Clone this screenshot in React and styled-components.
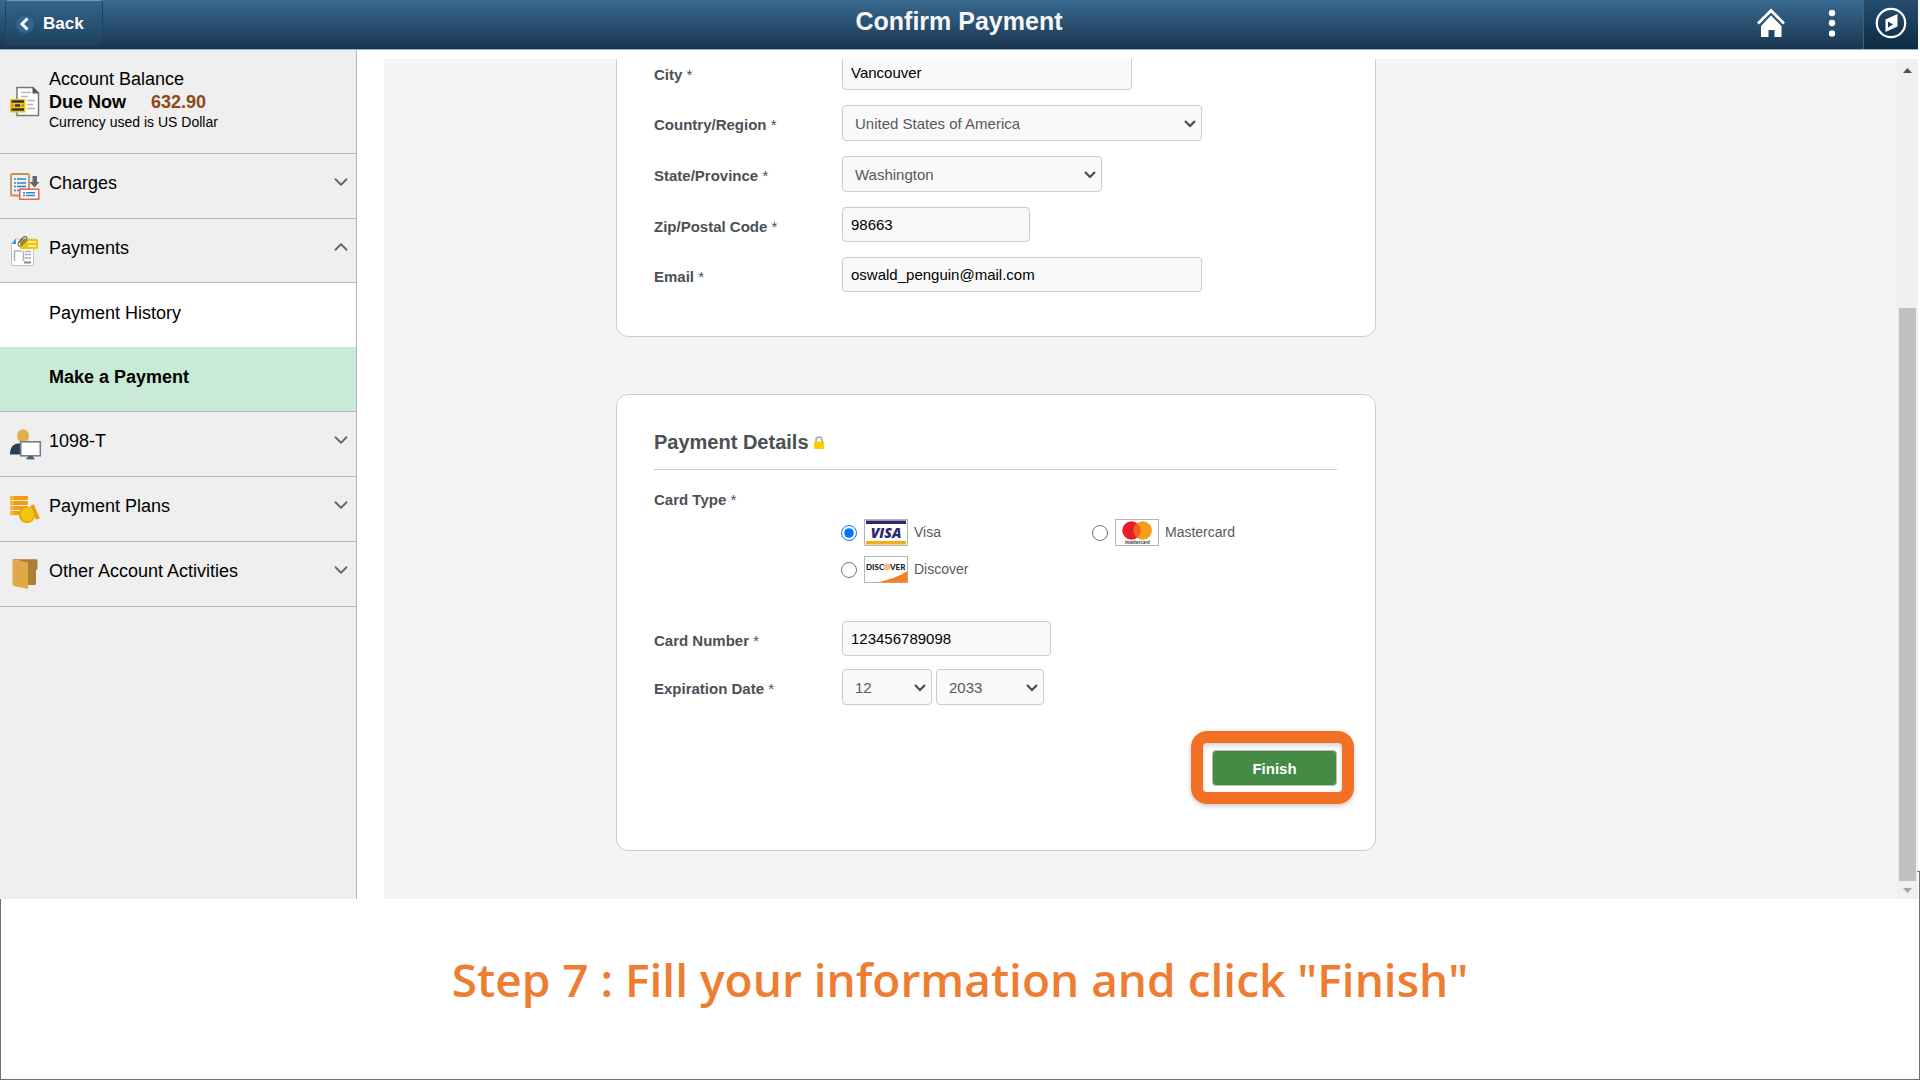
import React from 'react';
import styled, { createGlobalStyle } from 'styled-components';
import { ChevronDown, ChevronUp } from 'lucide-react';

const GlobalStyle = createGlobalStyle`
  * {
    box-sizing: border-box;
  }

  body {
    margin: 0;
    background: #ffffff;
    font-family: "Liberation Sans", Arial, sans-serif;
    color: #000000;
  }
`;

const Page = styled.div`
  display: flex;
  flex-direction: column;
  height: 100vh;
  min-height: 600px;
`;

const AppWindow = styled.div`
  flex: 1;
  min-height: 0;
  display: flex;
  flex-direction: column;
  margin-right: 2px;
`;

/* ---- header ---- */

const Header = styled.header`
  flex: none;
  display: grid;
  grid-template-columns: 1fr auto 1fr;
  height: 50px;
  background: linear-gradient(#386a90, #1a3550);
  border-bottom: 1px solid #8fb0dc;
`;

const BackButton = styled.button`
  justify-self: start;
  display: flex;
  align-items: center;
  gap: 8px;
  width: 98px;
  height: 45px;
  margin-left: 5px;
  padding: 2px 0 0 9px;
  border: 1px solid #1d4263;
  border-top-color: #6f98ba;
  border-radius: 4px;
  background: linear-gradient(#34648b, #1f4162);
  color: #ffffff;
  font-family: inherit;
  font-size: 17px;
  font-weight: bold;
  cursor: pointer;
`;

const Title = styled.h1`
  margin: 0;
  padding-top: 6px;
  font-size: 25px;
  line-height: 30px;
  color: #f7f7f7;
`;

const HeaderActions = styled.div`
  justify-self: end;
  display: flex;
`;

const IconButton = styled.button`
  display: flex;
  align-items: center;
  justify-content: center;
  width: ${(props) => props.$width};
  padding: 0 0 3px;
  border: none;
  border-left: ${(props) => (props.$dark ? '1px solid #3d617f' : 'none')};
  background: ${(props) => (props.$dark ? 'linear-gradient(#254e70, #0f2a43)' : 'none')};
  cursor: pointer;
`;

/* ---- body ---- */

const Body = styled.div`
  flex: 1;
  min-height: 0;
  display: flex;
`;

const Sidebar = styled.nav`
  flex: none;
  width: 357px;
  background: #efefef;
  border-right: 1px solid #b6b6b6;
  overflow: hidden;
`;

const Balance = styled.div`
  display: flex;
  gap: 7px;
  height: 104px;
  padding: 18px 10px 0;
  border-bottom: 1px solid #b6b6b6;

  svg {
    margin-top: 17px;
  }
`;

const BalanceLine = styled.div`
  font-size: 18px;
  line-height: 23px;
  font-weight: ${(props) => (props.$bold ? 'bold' : 'normal')};
`;

const Amount = styled.span`
  margin-left: 25px;
  color: #8b4a17;
`;

const BalanceNote = styled.div`
  font-size: 14px;
  line-height: 16px;
`;

const NavItem = styled.button`
  display: flex;
  align-items: center;
  gap: 7px;
  width: 100%;
  height: ${(props) => (props.$open ? '64px' : '65px')};
  padding: 0 4px 0 10px;
  border: none;
  border-bottom: 1px solid #b6b6b6;
  background: none;
  color: #000000;
  font-family: inherit;
  font-size: 18px;
  text-align: left;
  cursor: pointer;
`;

const NavText = styled.span`
  flex: 1;
  padding-bottom: 5px;
`;

const Chevron = styled.span`
  display: flex;
  padding-bottom: 8px;
  color: #666666;
`;

const SubItem = styled.a`
  display: flex;
  align-items: center;
  height: ${(props) => (props.$active ? '65px' : '64px')};
  padding: 0 0 4px 49px;
  background: ${(props) => (props.$active ? '#c8ead7' : '#ffffff')};
  border-bottom: ${(props) => (props.$active ? '1px solid #b6b6b6' : 'none')};
  font-size: 18px;
  font-weight: ${(props) => (props.$active ? 'bold' : 'normal')};
  color: #000000;
  text-decoration: none;
`;

const Main = styled.main`
  flex: 1;
  min-width: 0;
  display: flex;
  margin: 9px 0 0 27px;
  background: #f4f4f4;
`;

/* anchored to the end, the form is scrolled all the way down */
const Scroller = styled.div`
  flex: 1;
  min-width: 0;
  display: flex;
  flex-direction: column;
  justify-content: flex-end;
  gap: 57px;
  padding: 0 40px 48px 232px;
  overflow: hidden;
`;

const ScrollBar = styled.div`
  flex: none;
  display: flex;
  flex-direction: column;
  width: 21px;
  background: #f0f0f0;
`;

const ScrollArrow = styled.span`
  display: flex;
  align-items: center;
  justify-content: center;
  height: 18px;
  padding-top: ${(props) => (props.$up ? '5px' : '0')};
`;

const ScrollTrack = styled.div`
  flex: 1;
  display: flex;
  flex-direction: column;
  justify-content: flex-end;
  padding: 0 2px;
`;

const ScrollThumb = styled.div`
  height: 71.3%;
  background: #c1c1c1;
`;

/* ---- form ---- */

const Card = styled.section`
  flex: none;
  max-width: 760px;
  padding: 35px 38px ${(props) => props.$bottom} 37px;
  border: 1px solid #cccccc;
  border-radius: 12px;
  background: #ffffff;
`;

const CardTitle = styled.h2`
  display: flex;
  align-items: center;
  gap: 5px;
  margin: 0;
  padding-bottom: 15px;
  border-bottom: 1px solid #cccccc;
  font-size: 20px;
  line-height: 24px;
  color: #4c5054;
`;

const Rows = styled.div`
  display: flex;
  flex-direction: column;
  gap: ${(props) => props.$gap};
`;

const Row = styled.div`
  display: grid;
  grid-template-columns: 188px 1fr;
  align-items: center;
`;

const Label = styled.label`
  padding-top: 4px;
  font-size: 15px;
  line-height: 20px;
  font-weight: bold;
  color: #4c5054;
`;

const Star = styled.span`
  font-weight: normal;
`;

const Input = styled.input`
  width: ${(props) => props.$width};
  height: 35px;
  padding: 0 8px;
  border: 1px solid #cccccc;
  border-radius: 4px;
  background: #f9f9f9;
  color: #000000;
  font-family: inherit;
  font-size: 15px;
`;

const SelectWrap = styled.span`
  position: relative;
  display: block;
  width: ${(props) => props.$width};

  svg {
    position: absolute;
    right: 6px;
    top: 15px;
    pointer-events: none;
  }
`;

const SelectBox = styled.select`
  appearance: none;
  display: block;
  width: 100%;
  height: 36px;
  padding: 0 24px 0 12px;
  border: 1px solid #cccccc;
  border-radius: 4px;
  background: #f9f9f9;
  color: #555a60;
  font-family: inherit;
  font-size: 15px;
`;

const DateFields = styled.div`
  display: flex;
  gap: 4px;
`;

const CardTypes = styled.fieldset`
  margin: 16px 0 38px;
  padding: 0;
  border: none;
`;

const Legend = styled.legend`
  padding: 4px 0 0;
  font-size: 15px;
  line-height: 20px;
  font-weight: bold;
  color: #4c5054;
`;

const CardGrid = styled.div`
  display: grid;
  grid-template-columns: 251px 1fr;
  gap: 10px 0;
  padding: 9px 0 0 187px;
`;

const CardOption = styled.label`
  display: flex;
  align-items: center;
  gap: 6px;
  height: 27px;
  font-size: 14px;
  color: #555a60;
`;

const CardName = styled.span`
  padding-bottom: 2px;
`;

const Radio = styled.input`
  width: 16px;
  height: 16px;
  margin: 0 1px 0 0;
  accent-color: #0075ff;
`;

const Actions = styled.div`
  display: flex;
  justify-content: flex-end;
  margin-top: 45px;
`;

const Highlight = styled.div`
  position: relative;

  &::after {
    content: '';
    position: absolute;
    inset: -19px -17px -18px -21px;
    border: 12px solid #f36f24;
    border-radius: 16px;
    box-shadow: 0 2px 5px rgba(0, 0, 0, 0.22), inset 0 3px 5px rgba(0, 0, 0, 0.16);
    pointer-events: none;
  }
`;

const FinishButton = styled.button`
  display: block;
  width: 125px;
  height: 36px;
  border: 1px solid #b9bdb9;
  border-radius: 4px;
  background: #458a45;
  color: #ffffff;
  font-family: inherit;
  font-size: 15px;
  font-weight: bold;
  cursor: pointer;
`;

/* ---- caption ---- */

const Caption = styled.footer`
  flex: none;
  position: relative;
  padding: 48px 20px 68px;
  border: 1px solid #707070;
  border-top: none;
  text-align: center;
  font-family: "Open Sans", "Noto Sans", sans-serif;
  font-size: 46px;
  line-height: 64px;
  font-weight: 600;
  color: #ed7d31;

  &::before {
    content: '';
    position: absolute;
    top: -28px;
    right: -1px;
    width: 2px;
    height: 28px;
    border-top: 1px solid #707070;
    border-right: 1px solid #707070;
  }
`;

/* ---- icons ---- */

const BackIcon = () => (
  <svg width="20" height="20" viewBox="0 0 20 20">
    <circle cx="10" cy="10" r="9.5" fill="#33658c" stroke="#24506f" />
    <path d="M12.5 4.5 7 10l5.5 5.5" fill="none" stroke="#fff" strokeWidth="3" />
  </svg>
);

const HomeIcon = () => (
  <svg width="28" height="30" viewBox="0 0 28 30">
    <path d="M1 15.500 14 2.500l13 13" fill="none" stroke="#fff" strokeWidth="3" />
    <path d="M14 7.500 24.500 18v11H17.500v-7h-6v7H4V18z" fill="#fff" />
  </svg>
);

const DotsIcon = () => (
  <svg width="8" height="28" viewBox="0 0 8 28">
    <circle cx="4" cy="4" r="3.2" fill="#fff" />
    <circle cx="4" cy="14" r="3.2" fill="#fff" />
    <circle cx="4" cy="24.5" r="3.2" fill="#fff" />
  </svg>
);

const CompassIcon = () => (
  <svg width="32" height="32" viewBox="0 0 32 32">
    <circle cx="16" cy="16" r="14.2" fill="none" stroke="#fff" strokeWidth="2.2" />
    <path d="M10.5 12.5 22.5 7v12.500L10.5 25z" fill="#fff" />
    <path d="M13 14.500v6l5-3z" fill="#1b3c59" />
  </svg>
);

const BalanceIcon = () => (
  <svg width="32" height="32" viewBox="0 0 32 32">
    <path d="M7 2.500h16l5.500 5.500v22.500H7z" fill="#fff" stroke="#777" strokeWidth="1.5" />
    <path d="M22.500 2v6.500H29z" fill="#555" />
    <path d="M11 7.500h10M11 11.500h7M17 15.500h8M17 19.500h6M17 23.500h8" stroke="#b5b5b5" strokeWidth="1.5" />
    <path d="M0 14h15.500v13.500H0z" fill="#f1c40f" />
    <path d="M1.500 16.500h12.500M1.500 24.500h12.500" stroke="#333" strokeWidth="2.5" />
    <path d="M5 20.500h5" stroke="#2c3e50" strokeWidth="2.5" />
    <path d="M1.500 20.500h2M11.500 20.500h2.500" stroke="#8a7a24" strokeWidth="1.5" />
  </svg>
);

const ChargesIcon = () => (
  <svg width="32" height="32" viewBox="0 0 32 32">
    <rect x="1" y="4" width="18" height="21.500" rx="1" fill="#ecf0f1" stroke="#c09553" strokeWidth="1.8" />
    <path d="M4 9h12M4 13h12M4 16.500h12M4 20.500h5" stroke="#2e86c1" strokeWidth="1.5" />
    <path d="M6.500 8v14" stroke="#ecf0f1" strokeWidth="1" />
    <path d="M22.500 6h4.500v6h2.500l-5 5.500-5-5.500h3z" fill="#666" />
    <rect x="9.800" y="19.200" width="19" height="10" fill="#fff" stroke="#e74c3c" strokeWidth="1.3" />
    <path d="M13 22.800h12M13 25.500h12" stroke="#2e86c1" strokeWidth="1.5" />
    <path d="M15.500 22v4.500" stroke="#fff" strokeWidth="1" />
  </svg>
);

const PaymentsIcon = () => (
  <svg width="32" height="32" viewBox="0 0 32 32">
    <path d="M6 4h17.500v26.500H1.500V9z" fill="#fff" stroke="#bdc3c7" />
    <path d="m1.500 9 4.500-5.500V9z" fill="#3498db" />
    <path d="M4 16h8M4.500 16v10M13.500 16v10M15 16.500h6M15 19.500h6M15 23h6" fill="none" stroke="#a9b3b4" strokeWidth="1.5" />
    <path d="M14 27.500h7" stroke="#7f8c8d" strokeWidth="2" />
    <rect x="10" y="4" width="18" height="10" rx="1" fill="#f1c40f" />
    <path d="M18 7h8M18 11h8" stroke="#fff6c9" strokeWidth="1.3" />
    <path d="m8 8 5-5.500c3-2 5 .5 3.500 2.500l-5 5.500c-2.500 1.800-4.500-.5-3-2.500l4.500-4.500M10.500 9l4.500-5" fill="none" stroke="#77704a" strokeWidth="1.2" />
  </svg>
);

const FormIcon = () => (
  <svg width="32" height="32" viewBox="0 0 32 32">
    <path d="M0 26.500c0-7 3-10.500 8-11h6v11z" fill="#2c3e50" />
    <ellipse cx="13" cy="8" rx="6" ry="6.700" fill="#e3ae4b" />
    <rect x="10.800" y="13.800" width="19.500" height="14" fill="#fff" stroke="#708090" strokeWidth="1.6" />
    <path d="M16.500 30.500h8" stroke="#4c6072" strokeWidth="1.8" />
    <path d="M18 29h5" stroke="#4c6072" strokeWidth="2" />
  </svg>
);

const PlansIcon = () => (
  <svg width="32" height="32" viewBox="0 0 32 32">
    <g fill="#f39c12">
      <rect y="3" width="18" height="4" rx="1" />
      <rect y="8" width="18" height="4" rx="1" />
      <rect y="13" width="18" height="4" rx="1" />
      <rect y="18" width="14" height="4" rx="1" />
    </g>
    <path d="M0 5h4M0 10h4M0 15h4M0 20h4" stroke="#f7b733" strokeWidth="3" />
    <path d="m22 12 6 14" stroke="#f39c12" strokeWidth="4" />
    <circle cx="17" cy="22" r="8.2" fill="#e0a80e" />
    <circle cx="17.500" cy="21.500" r="6.800" fill="#f1c40f" />
  </svg>
);

const FolderIcon = () => (
  <svg width="32" height="32" viewBox="0 0 32 32">
    <path d="M3 1h23l1.500 1v9l-1.500 1v14l-1 1h-8V5z" fill="#ae8036" />
    <path d="M3 1.500h23" stroke="#c29855" strokeWidth="1" />
    <path d="M2.500 1.500 18 4.500v26.500L4 28l-1.500-1.500z" fill="#e0a846" />
  </svg>
);

const LockIcon = () => (
  <svg width="10" height="13" viewBox="0 0 10 13">
    <path d="M2 6.500V4a3 3 0 0 1 6 0v2.500" fill="none" stroke="#a6a6a6" strokeWidth="1.6" />
    <rect y="5.500" width="10" height="7.500" rx="0.8" fill="#ffcc00" />
  </svg>
);

const SelectArrow = () => (
  <svg width="12" height="8" viewBox="0 0 12 8">
    <path d="m1 1 5 5 5-5" fill="none" stroke="#474c52" strokeWidth="2.2" />
  </svg>
);

const UpTriangle = () => (
  <svg width="9" height="5" viewBox="0 0 9 5">
    <path d="M0 5 4.500 0 9 5z" fill="#505050" />
  </svg>
);

const DownTriangle = () => (
  <svg width="9" height="5" viewBox="0 0 9 5">
    <path d="M0 0h9L4.500 5z" fill="#a3a3a3" />
  </svg>
);

const VisaLogo = () => (
  <svg width="44" height="27" viewBox="0 0 44 27" aria-hidden="true">
    <rect x="0.5" y="0.5" width="43" height="26" fill="#fff" stroke="#b5b5b5" />
    <path d="M2 1.500h40v3.500H2z" fill="#2a2a6c" />
    <path d="M2 22h40v3.500H2z" fill="#f2ae14" />
    <text x="22" y="18.500" textAnchor="middle" fontFamily="Open Sans" fontWeight="800" fontStyle="italic" fontSize="14" fill="#2a2a6c">VISA</text>
  </svg>
);

const DiscoverLogo = () => (
  <svg width="44" height="27" viewBox="0 0 44 27" aria-hidden="true">
    <rect x="0.5" y="0.5" width="43" height="26" fill="#fff" stroke="#b5b5b5" />
    <path d="M12 26.500C24 24.500 36 20 43.500 15v11.500z" fill="#f58220" />
    <circle cx="23" cy="10.800" r="3.4" fill="#f9b98a" />
    <text x="2" y="14" fontFamily="Lato" fontWeight="900" fontSize="8" fill="#222">DISC</text>
    <text x="26" y="14" fontFamily="Lato" fontWeight="900" fontSize="8" fill="#222">VER</text>
  </svg>
);

const MastercardLogo = () => (
  <svg width="44" height="27" viewBox="0 0 44 27" aria-hidden="true">
    <rect x="0.5" y="0.5" width="43" height="26" fill="#fff" stroke="#b5b5b5" />
    <circle cx="16.500" cy="11.500" r="9.2" fill="#eb1c26" />
    <circle cx="27.800" cy="11.500" r="9.2" fill="#f79e1b" />
    <path d="M22.150 4.200a9.200 9.200 0 0 1 0 14.600 9.200 9.200 0 0 1 0-14.600z" fill="#f26122" />
    <text x="22.500" y="25" textAnchor="middle" fontFamily="Lato" fontWeight="bold" fontSize="5" fill="#333">mastercard</text>
  </svg>
);

/* ---- parts ---- */

const NavGroup = ({ icon, text, open }) => (
  <NavItem type="button" aria-expanded={!!open} $open={open}>
    {icon}
    <NavText>{text}</NavText>
    <Chevron>
      {open ? <ChevronUp size={22} strokeWidth={2} /> : <ChevronDown size={22} strokeWidth={2} />}
    </Chevron>
  </NavItem>
);

const FieldLabel = ({ htmlFor, children }) => (
  <Label htmlFor={htmlFor}>
    {children} <Star>*</Star>
  </Label>
);

const TextField = ({ id, label, value, width }) => (
  <Row>
    <FieldLabel htmlFor={id}>{label}</FieldLabel>
    <Input id={id} type="text" defaultValue={value} $width={width} />
  </Row>
);

const Select = ({ id, value, width, ariaLabel }) => (
  <SelectWrap $width={width}>
    <SelectBox id={id} defaultValue={value} aria-label={ariaLabel}>
      <option>{value}</option>
    </SelectBox>
    <SelectArrow />
  </SelectWrap>
);

const SelectField = ({ id, label, value, width }) => (
  <Row>
    <FieldLabel htmlFor={id}>{label}</FieldLabel>
    <Select id={id} value={value} width={width} />
  </Row>
);

const cardTypes = [
  { name: 'Visa', logo: <VisaLogo /> },
  { name: 'Mastercard', logo: <MastercardLogo /> },
  { name: 'Discover', logo: <DiscoverLogo /> },
];

const App = () => {
  return (
    <Page>
      <GlobalStyle />
      <AppWindow>
        <Header>
          <BackButton type="button">
            <BackIcon />
            Back
          </BackButton>
          <Title>Confirm Payment</Title>
          <HeaderActions>
            <IconButton type="button" aria-label="Home" $width="60px"><HomeIcon /></IconButton>
            <IconButton type="button" aria-label="Actions" $width="62px"><DotsIcon /></IconButton>
            <IconButton type="button" aria-label="Navigator" $width="55px" $dark><CompassIcon /></IconButton>
          </HeaderActions>
        </Header>

        <Body>
          <Sidebar>
            <Balance>
              <BalanceIcon />
              <div>
                <BalanceLine>Account Balance</BalanceLine>
                <BalanceLine $bold>
                  Due Now<Amount>632.90</Amount>
                </BalanceLine>
                <BalanceNote>Currency used is US Dollar</BalanceNote>
              </div>
            </Balance>
            <NavGroup icon={<ChargesIcon />} text="Charges" />
            <NavGroup icon={<PaymentsIcon />} text="Payments" open />
            <SubItem href="#history">Payment History</SubItem>
            <SubItem href="#payment" $active>Make a Payment</SubItem>
            <NavGroup icon={<FormIcon />} text="1098-T" />
            <NavGroup icon={<PlansIcon />} text="Payment Plans" />
            <NavGroup icon={<FolderIcon />} text="Other Account Activities" />
          </Sidebar>

          <Main>
            <Scroller>
              <Card $bottom="44px">
                <Rows $gap="15px">
                  <TextField id="city" label="City" value="Vancouver" width="290px" />
                  <SelectField id="country" label="Country/Region" value="United States of America" width="360px" />
                  <SelectField id="state" label="State/Province" value="Washington" width="260px" />
                  <TextField id="zip" label="Zip/Postal Code" value="98663" width="188px" />
                  <TextField id="email" label="Email" value="oswald_penguin@mail.com" width="360px" />
                </Rows>
              </Card>

              <Card $bottom="64px">
                <CardTitle>
                  Payment Details
                  <LockIcon />
                </CardTitle>
                <CardTypes>
                  <Legend>
                    Card Type <Star>*</Star>
                  </Legend>
                  <CardGrid>
                    {cardTypes.map((card) => (
                      <CardOption key={card.name}>
                        <Radio type="radio" name="cardType" defaultChecked={card.name === 'Visa'} />
                        {card.logo}
                        <CardName>{card.name}</CardName>
                      </CardOption>
                    ))}
                  </CardGrid>
                </CardTypes>
                <Rows $gap="13px">
                  <TextField id="cardNumber" label="Card Number" value="123456789098" width="209px" />
                  <Row>
                    <FieldLabel htmlFor="month">Expiration Date</FieldLabel>
                    <DateFields>
                      <Select id="month" value="12" width="90px" />
                      <Select id="year" value="2033" width="108px" ariaLabel="Expiration year" />
                    </DateFields>
                  </Row>
                </Rows>
                <Actions>
                  <Highlight>
                    <FinishButton type="button">Finish</FinishButton>
                  </Highlight>
                </Actions>
              </Card>
            </Scroller>

            <ScrollBar aria-hidden="true">
              <ScrollArrow $up><UpTriangle /></ScrollArrow>
              <ScrollTrack><ScrollThumb /></ScrollTrack>
              <ScrollArrow><DownTriangle /></ScrollArrow>
            </ScrollBar>
          </Main>
        </Body>
      </AppWindow>

      <Caption>Step 7 : Fill your information and click "Finish"</Caption>
    </Page>
  );
};

export default App;
